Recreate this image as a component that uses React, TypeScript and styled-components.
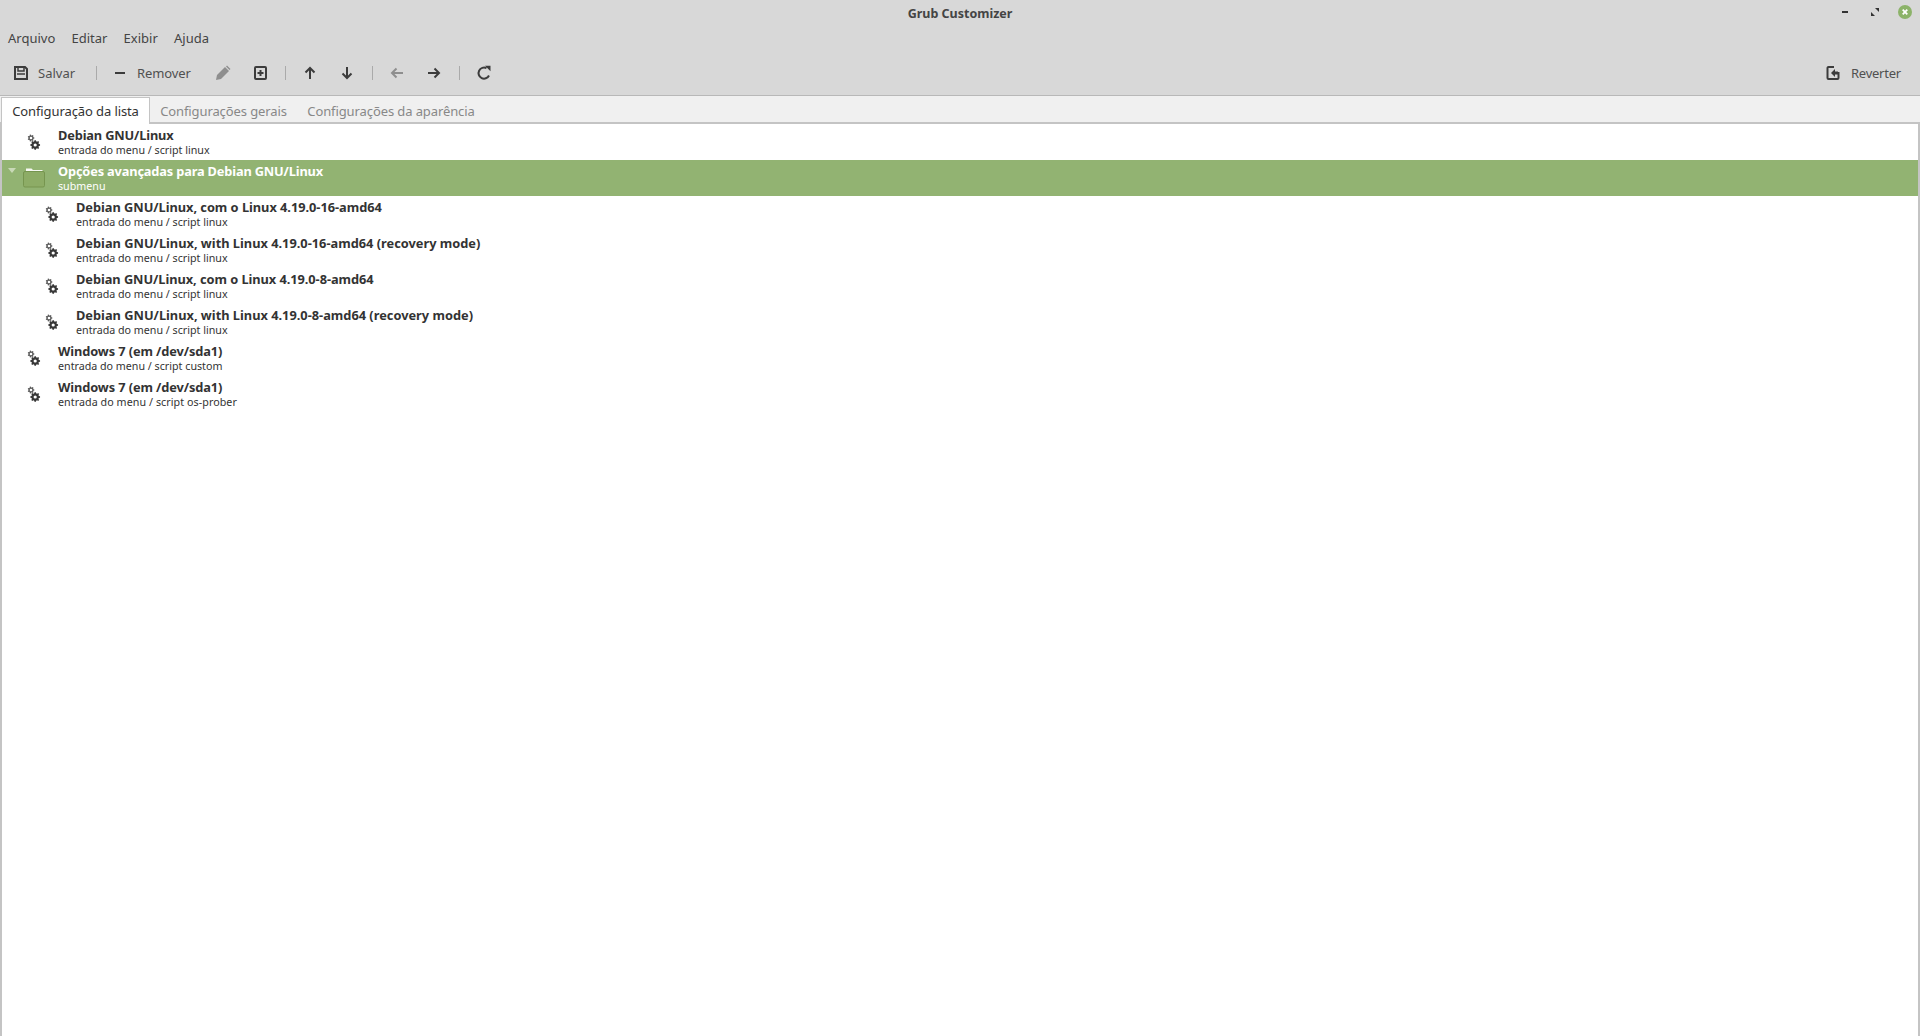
import React from "react";
import styled, { createGlobalStyle } from "styled-components";

const Global = createGlobalStyle`
  html, body { margin: 0; padding: 0; height: 100%; overflow: hidden; background: #fff; }
  #root { height: 100%; }
`;

const Win = styled.div`
  width: 1920px; height: 1036px; display: flex; flex-direction: column; overflow: hidden;
  font-family: "Noto Sans", "Open Sans", sans-serif; font-size: 13px; color: #3c3c3c; background: #fff;
`;
const Head = styled.div`
  background: #d8d8d8; height: 95px; border-bottom: 1px solid #b8b8b8; flex: none;
  display: flex; flex-direction: column;
`;
const TitleBar = styled.div`
  height: 26px; flex: none; display: flex; align-items: center; justify-content: center; position: relative;
`;
const Title = styled.span`
  font-size: 12.5px; font-weight: 700; color: #444;
`;
const WinBtns = styled.div`
  position: absolute; right: 8px; top: 5px; display: flex; align-items: center; gap: 16px; height: 14px;
`;
const MenuBar = styled.div`
  height: 24px; flex: none; display: flex; align-items: center; padding-left: 8px; gap: 16.2px;
  font-size: 13px; color: #444;
`;
const Toolbar = styled.div`
  flex: 1; display: flex; align-items: center; padding: 0 19px 0 13px;
`;
const TBtn = styled.div<{ $w: number; $disabled?: boolean }>`
  width: ${p => p.$w}px; flex: none; display: flex; align-items: center; color: ${p => (p.$disabled ? "#8e8e8e" : "#3c3c3c")};
`;
const BtnLabel = styled.span<{ $gap: number; $spacing?: number }>`
  margin-left: ${p => p.$gap}px; font-size: 13px; color: #505050; white-space: nowrap;
  letter-spacing: ${p => p.$spacing ?? 0}px;
`;
const Sep = styled.div<{ $r: number }>`
  width: 1px; height: 14px; background: #aaa; flex: none; margin-right: ${p => p.$r}px;
`;
const Spacer = styled.div`flex: 1;`;
const TabBar = styled.div`
  height: 26px; flex: none; background: #f0f0f0; display: flex; align-items: flex-end; padding-left: 1px;
  border-bottom: 2px solid #c4c4c4;
`;
const Tab = styled.div<{ $active?: boolean; $w: number }>`
  width: ${p => p.$w}px; box-sizing: border-box; flex: none;
  display: flex; align-items: center; justify-content: center; font-size: 13px; letter-spacing: -0.1px;
  height: 24px; padding-top: 1px;
  color: ${p => (p.$active ? "#333" : "#888")};
  ${p => (p.$active ? "background:#fff;border:1px solid #c4c4c4;border-bottom:none;margin-bottom:-2px;height:27px;padding-top:0;" : "")}
`;
const ListArea = styled.div`
  flex: 1; border-left: 2px solid #c4c4c4; border-right: 2px solid #c4c4c4; background: #fff;
`;
const Row = styled.div<{ $sel?: boolean; $depth?: number }>`
  height: 36px; display: flex; align-items: center; position: relative;
  padding-left: ${p => (p.$depth ? 41 : 23)}px;
  background: ${p => (p.$sel ? "#92b372" : "#fff")};
  color: ${p => (p.$sel ? "#fff" : "#333")};
`;
const IconSlot = styled.div`
  width: 18px; height: 18px; flex: none; margin-right: 15px; display: flex; align-items: center; justify-content: center;
  & > svg { flex: none; }
`;
const Text = styled.div`display: flex; flex-direction: column;`;
const Name = styled.div<{ $spacing?: number }>`
  font-size: 12.8px; line-height: 16px; font-weight: 700; white-space: nowrap;
  letter-spacing: ${p => p.$spacing ?? 0}px;
`;
const Sub = styled.div<{ $spacing?: number }>`
  font-size: 10.7px; line-height: 13px; margin-top: 1px; white-space: nowrap;
  letter-spacing: ${p => p.$spacing ?? 0}px;
`;
const Expander = styled.div`
  position: absolute; left: 6px; top: 8px; width: 0; height: 0;
  border-left: 4px solid transparent; border-right: 4px solid transparent; border-top: 5px solid #c9d9b7;
`;

const S = { width: 16, height: 16, viewBox: "0 0 16 16" };

// Toothed ring centred on (cx, cy), used for the small and large gear of the entry icon.
const gear = (cx: number, cy: number, ro: number, ri: number, hole: number, teeth: number) => {
  const pts: string[] = [];
  const step = (Math.PI * 2) / teeth;
  for (let i = 0; i < teeth; i++) {
    const a = i * step;
    [[-0.3, ri], [-0.17, ro], [0.17, ro], [0.3, ri]].forEach(([f, r]) => {
      const t = a + f * step * 1.1;
      pts.push(`${(cx + r * Math.cos(t)).toFixed(2)} ${(cy + r * Math.sin(t)).toFixed(2)}`);
    });
  }
  return `M${pts.join("L")}Z M${cx - hole} ${cy}a${hole} ${hole} 0 1 0 ${hole * 2} 0a${hole} ${hole} 0 1 0 ${-hole * 2} 0Z`;
};

const Gears = () => (
  <svg width="16" height="16" viewBox="0 0 16 16" fill="#383838">
    <path fillRule="evenodd" fill="#5a5a5a" d={gear(5, 4, 3.4, 2.6, 1.3, 7)} />
    <path fillRule="evenodd" d={gear(9.2, 11, 4.9, 3.8, 1.6, 8)} />
  </svg>
);
const Folder = () => (
  <svg width="24" height="22" viewBox="0 0 24 22">
    <path d="M4 4V1.500h5.500L11 3h9.500v1z" fill="#f6f8f2" />
    <rect x="1.500" y="4.500" width="21" height="15.500" rx="1.500" fill="#8dac66" stroke="#76954f" />
  </svg>
);

const rows = [
  { n: "Debian GNU/Linux", s: "entrada do menu / script linux", sp: -0.15 },
  { n: "Opções avançadas para Debian GNU/Linux", s: "submenu", sel: true, sp: -0.16 },
  { n: "Debian GNU/Linux, com o Linux 4.19.0-16-amd64", s: "entrada do menu / script linux", d: 1, sp: -0.03 },
  { n: "Debian GNU/Linux, with Linux 4.19.0-16-amd64 (recovery mode)", s: "entrada do menu / script linux", d: 1 },
  { n: "Debian GNU/Linux, com o Linux 4.19.0-8-amd64", s: "entrada do menu / script linux", d: 1, sp: -0.05 },
  { n: "Debian GNU/Linux, with Linux 4.19.0-8-amd64 (recovery mode)", s: "entrada do menu / script linux", d: 1 },
  { n: "Windows 7 (em /dev/sda1)", s: "entrada do menu / script custom", sp: -0.1 },
  { n: "Windows 7 (em /dev/sda1)", s: "entrada do menu / script os-prober", sp: -0.1, ssp: 0.07 },
];

export default function App() {
  return (
    <Win>
      <Global />
      <Head>
        <TitleBar>
          <Title>Grub Customizer</Title>
          <WinBtns>
            <svg width="14" height="14" viewBox="0 0 14 14"><rect x="4" y="6" width="6" height="2" fill="#333" /></svg>
            <svg width="14" height="14" viewBox="0 0 14 14"><path d="M7 3h4v4zM7 11H3V7z" fill="#333" /></svg>
            <svg width="14" height="14" viewBox="0 0 14 14"><circle cx="7" cy="7" r="7" fill="#8cb369" /><path d="M4.700 4.700l4.600 4.600M9.300 4.700l-4.600 4.600" stroke="#fff" strokeWidth="1.800" /></svg>
          </WinBtns>
        </TitleBar>
        <MenuBar><span>Arquivo</span><span>Editar</span><span>Exibir</span><span>Ajuda</span></MenuBar>
        <Toolbar>
          <TBtn $w={83}>
            <svg {...S} fill="none"><path d="M2 2h10l2 2v10H2z" stroke="currentColor" strokeWidth="2" /><path d="M5 2v4h6V2M4 9h8" stroke="currentColor" strokeWidth="1.500" /></svg>
            <BtnLabel $gap={9}>Salvar</BtnLabel>
          </TBtn>
          <Sep $r={15} />
          <TBtn $w={103}>
            <svg {...S}><rect x="3" y="7" width="10" height="2" fill="currentColor" /></svg>
            <BtnLabel $gap={9} $spacing={-0.1}>Remover</BtnLabel>
          </TBtn>
          <TBtn $w={37} $disabled>
            <svg {...S}><path d="M1 15l1-5 8-8 4 4-8 8zM11 1.500l1-1 3.500 3.500-1 1z" fill="currentColor" /></svg>
          </TBtn>
          <TBtn $w={33}>
            <svg {...S} fill="none"><rect x="3" y="2" width="11" height="12" rx="1" stroke="currentColor" strokeWidth="2" /><path d="M8.500 5v6M5.500 8h6" stroke="currentColor" strokeWidth="2" /></svg>
          </TBtn>
          <Sep $r={16} />
          <TBtn $w={37}>
            <svg {...S} fill="none"><path d="M8 14V3M3.500 7.500L8 3l4.500 4.500" stroke="currentColor" strokeWidth="2" /></svg>
          </TBtn>
          <TBtn $w={33}>
            <svg {...S} fill="none"><path d="M8 2v11M3.500 8.500L8 13l4.500-4.500" stroke="currentColor" strokeWidth="2" /></svg>
          </TBtn>
          <Sep $r={16} />
          <TBtn $w={37} $disabled>
            <svg {...S} fill="none"><path d="M14 8H3M7.500 3.500L3 8l4.500 4.500" stroke="currentColor" strokeWidth="2" /></svg>
          </TBtn>
          <TBtn $w={33}>
            <svg {...S} fill="none"><path d="M2 8h11M8.500 3.500L13 8l-4.500 4.500" stroke="currentColor" strokeWidth="2" /></svg>
          </TBtn>
          <Sep $r={16} />
          <TBtn $w={20}>
            <svg {...S} fill="none"><path d="M13 10.500A5.500 5.500 0 1110.500 3.200" stroke="currentColor" strokeWidth="2" /><path d="M9 .8h5.500v5.400z" fill="currentColor" /></svg>
          </TBtn>
          <Spacer />
          <TBtn $w={76}>
            <svg {...S} fill="none"><path d="M9 2H3.500a1 1 0 00-1 1v10a1 1 0 001 1h9a1 1 0 001-1V7" stroke="currentColor" strokeWidth="2" /><path d="M6 8l4-4v2.500h3v3h-3V12z" fill="currentColor" /></svg>
            <BtnLabel $gap={10} $spacing={-0.25}>Reverter</BtnLabel>
          </TBtn>
        </Toolbar>
      </Head>
      <TabBar>
        <Tab $active $w={149}>Configuração da lista</Tab>
        <Tab $w={147}>Configurações gerais</Tab>
        <Tab $w={188}>Configurações da aparência</Tab>
      </TabBar>
      <ListArea>
        {rows.map((r, i) => (
          <Row key={i} $sel={r.sel} $depth={r.d}>
            {r.sel && <Expander />}
            <IconSlot>{r.sel ? <Folder /> : <Gears />}</IconSlot>
            <Text><Name $spacing={r.sp}>{r.n}</Name><Sub $spacing={r.ssp}>{r.s}</Sub></Text>
          </Row>
        ))}
      </ListArea>
    </Win>
  );
}
